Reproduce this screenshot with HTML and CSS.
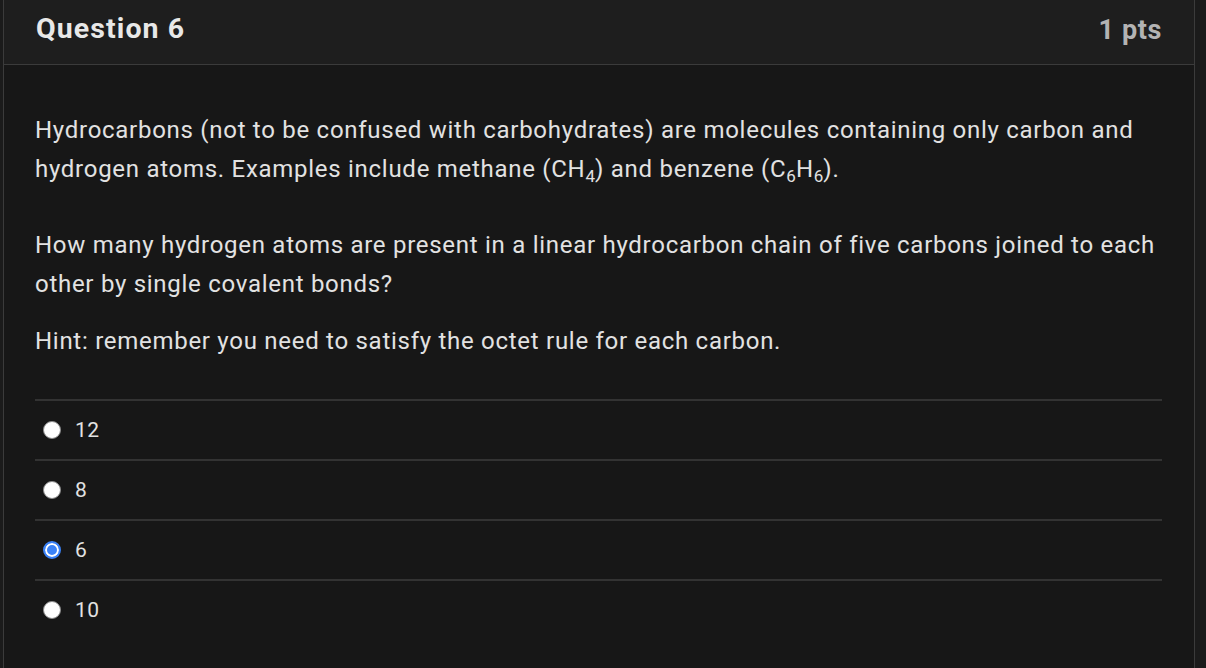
FILE: index.html
```html
<!DOCTYPE html>
<html>
<head>
<meta charset="utf-8">
<link rel="stylesheet" href="styles.css">
</head>
<body>
<div class="page">
  <div class="card">
    <div class="card-header">
      <h2 class="title">Question 6</h2>
      <span class="pts">1 pts</span>
    </div>
    <div class="card-body">
      <p class="p-intro">Hydrocarbons (not to be confused with carbohydrates) are molecules containing only carbon and hydrogen atoms. Examples include methane (CH<sub>4</sub>) and benzene (C<sub>6</sub>H<sub>6</sub>).</p>
      <p class="p-q">How many hydrogen atoms are present in a linear hydrocarbon chain of five carbons joined to each other by single covalent bonds?</p>
      <p class="p-hint">Hint: remember you need to satisfy the octet rule for each carbon.</p>
      <div class="answers">
        <div class="answer"><span class="radio"></span><span class="label">12</span></div>
        <div class="answer"><span class="radio"></span><span class="label">8</span></div>
        <div class="answer"><span class="radio checked"></span><span class="label">6</span></div>
        <div class="answer"><span class="radio"></span><span class="label">10</span></div>
      </div>
    </div>
  </div>
</div>
</body>
</html>
```
FILE: styles.css
```css
html, body {
  margin: 0;
  padding: 0;
  background: #1b1b1b;
  font-family: Roboto, "Liberation Sans", sans-serif;
  color: #e2e2e2;
}
.page {
  width: 1206px;
  height: 668px;
  overflow: hidden;
  padding-left: 3px;
  box-sizing: border-box;
}
.card {
  width: 1192px;
  border-left: 1px solid #3b3b3b;
  border-right: 1px solid #3b3b3b;
  box-sizing: border-box;
  background: #171717;
  min-height: 668px;
}
.card-header {
  height: 65px;
  background: #1e1e1e;
  border-bottom: 1px solid #3b3b3b;
  box-sizing: border-box;
  display: flex;
  align-items: center;
  justify-content: space-between;
  padding: 0 32px 0 32px;
}
.title {
  margin: 0;
  font-size: 28.5px;
  letter-spacing: 1.1px;
  font-weight: 700;
  color: #e8e8e8;
  padding-bottom: 7px;
}
.pts {
  font-size: 27px;
  letter-spacing: 0.6px;
  font-weight: 700;
  color: #b3b3b3;
  padding-bottom: 4px;
}
.card-body {
  padding: 46px 31px 0 31px;
}
.card-body p {
  margin: 0;
  font-size: 24px;
  letter-spacing: 0.72px;
  line-height: 39px;
}
.p-intro { margin-bottom: 37px !important; }
.p-q { margin-bottom: 18px !important; }
.p-hint { margin-bottom: 38px !important; }
sub {
  font-size: 17px;
  letter-spacing: 0;
  line-height: 0;
  vertical-align: -5px;
}
.answers {
  width: 1127px;
}
.answer {
  height: 60px;
  border-top: 2px solid #333333;
  box-sizing: border-box;
  display: flex;
  align-items: center;
  padding-left: 8px;
}
.radio {
  width: 18px;
  height: 18px;
  border-radius: 50%;
  background: #ffffff;
  border: 1px solid #8a8a8a;
  box-sizing: border-box;
  margin-right: 14px;
}
.radio.checked {
  background: #3b82f6;
  border: 2px solid #3b82f6;
  box-shadow: inset 0 0 0 2px #ffffff;
}
.label {
  font-size: 21px;
  letter-spacing: 0.5px;
  color: #e2e2e2;
}
```
